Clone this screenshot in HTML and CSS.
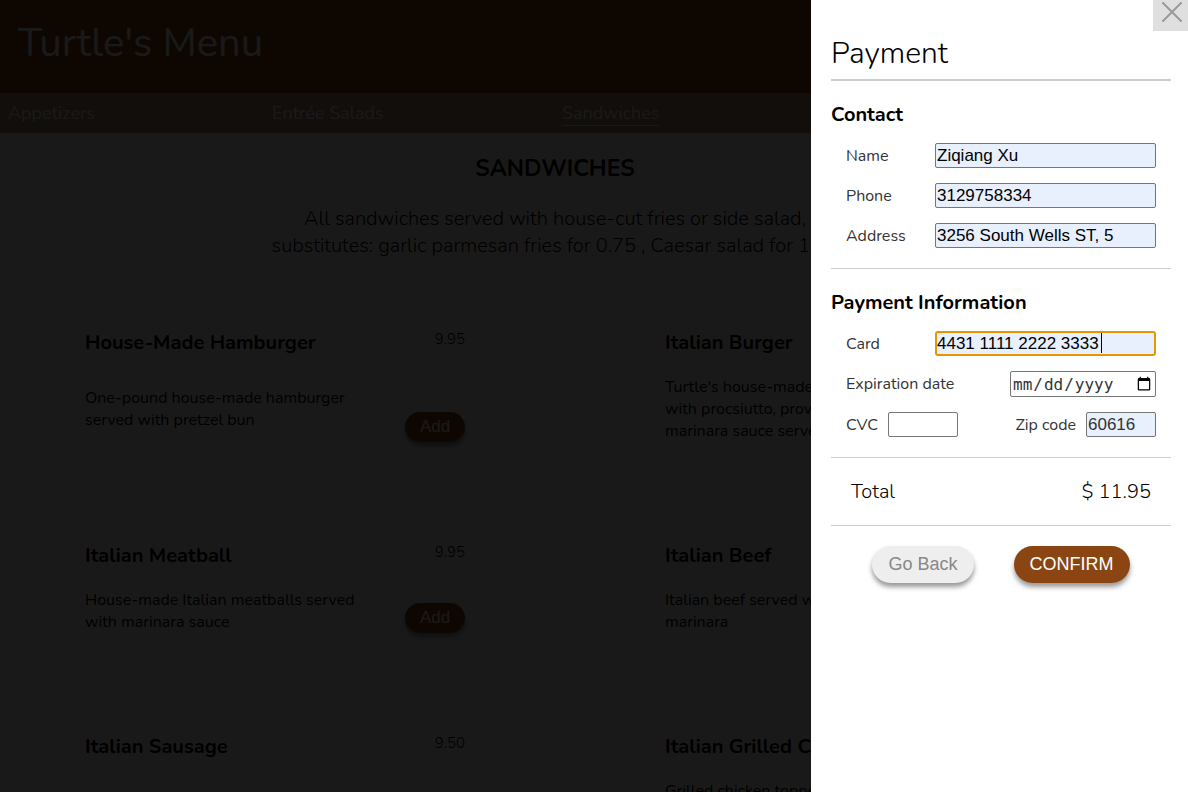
FILE: index.html
```html
<!DOCTYPE html>
<html lang="en">
<head>
<meta charset="utf-8">
<title>Turtle's Menu</title>
<link rel="stylesheet" href="styles.css">
</head>
<body>
<div class="page">
  <header class="header"><h1 class="brand">Turtle's Menu</h1></header>
  <nav class="nav">
    <a class="nav-link" href="#appetizers">Appetizers</a>
    <a class="nav-link" href="#salads">Entrée Salads</a>
    <a class="nav-link active" href="#sandwiches">Sandwiches</a>
  </nav>
  <main class="menu">
    <div class="intro">
      <h2 class="intro-title">SANDWICHES</h2>
      <p class="intro-text">All sandwiches served with house-cut fries or side salad,<br>substitutes: garlic parmesan fries for 0.75 , Caesar salad for 1.50</p>
    </div>
    <div class="items">
      <article class="item tall">
        <h3 class="item-name">House-Made Hamburger</h3><span class="price">9.95</span>
        <p class="desc">One-pound house-made hamburger served with pretzel bun</p><button class="add" type="button">Add</button>
      </article>
      <article class="item tall">
        <h3 class="item-name">Italian Burger</h3><span class="price"></span>
        <p class="desc">Turtle's house-made<br>with procsiutto, provolone,<br>marinara sauce served</p>
      </article>
      <article class="item">
        <h3 class="item-name">Italian Meatball</h3><span class="price">9.95</span>
        <p class="desc">House-made Italian meatballs served with marinara sauce</p><button class="add" type="button">Add</button>
      </article>
      <article class="item">
        <h3 class="item-name">Italian Beef</h3><span class="price"></span>
        <p class="desc">Italian beef served with<br>marinara</p>
      </article>
      <article class="item">
        <h3 class="item-name">Italian Sausage</h3><span class="price">9.50</span>
      </article>
      <article class="item">
        <h3 class="item-name">Italian Grilled Chicken</h3><span class="price"></span>
        <p class="desc">Grilled chicken topped<br>&nbsp;</p>
      </article>
    </div>
  </main>
</div>
<div class="overlay"></div>
<aside class="drawer">
  <button class="close" type="button" aria-label="Close">
    <svg class="close-icon" width="20" height="20" viewBox="0 0 20 20"><path d="M1 1 L19 19 M19 1 L1 19" fill="none" stroke="#999" stroke-width="2" stroke-linecap="round"/></svg>
  </button>
  <h2 class="title">Payment</h2>
  <form class="form">
    <section class="section">
      <h3 class="subtitle">Contact</h3>
      <div class="row"><label for="name">Name</label><input class="field filled" id="name" type="text" value="Ziqiang Xu"></div>
      <div class="row"><label for="phone">Phone</label><input class="field filled" id="phone" type="text" value="3129758334"></div>
      <div class="row"><label for="address">Address</label><input class="field filled" id="address" type="text" value="3256 South Wells ST, 5"></div>
    </section>
    <section class="section">
      <h3 class="subtitle">Payment Information</h3>
      <div class="row"><label for="card">Card</label><span class="card-wrap"><input class="field filled focused" id="card" type="text" value="4431 1111 2222 3333"><span class="caret"></span></span></div>
      <div class="row"><label for="exp">Expiration date</label><input class="field date" id="exp" type="date"></div>
      <div class="row">
        <span class="pair"><label for="cvc">CVC</label><input class="field short" id="cvc" type="text"></span>
        <span class="pair"><label for="zip">Zip code</label><input class="field short filled dim" id="zip" type="text" value="60616"></span>
      </div>
    </section>
    <div class="total"><span>Total</span><span>$ 11.95</span></div>
    <div class="actions">
      <button class="btn back" type="button">Go Back</button>
      <button class="btn confirm" type="button">CONFIRM</button>
    </div>
  </form>
</aside>
</body>
</html>
```
FILE: styles.css
```css
* { box-sizing: border-box; }
body {
  margin: 0;
  font-family: Nunito, "Open Sans", sans-serif;
  font-weight: 300;
  color: #000;
  background: #fff;
}
h1, h2, h3, p { margin: 0; }
.page { height: 100vh; overflow: hidden; }
.header { height: 93px; padding: 16px 18px; background: #8b4513; }
.brand { font-size: 40px; line-height: 54px; font-weight: 400; color: #fff; }
.nav {
  display: grid;
  grid-template-columns: 264px 290px auto;
  justify-items: start;
  align-items: center;
  height: 40px;
  padding: 0 8px;
  background: #b08c70;
}
.nav-link {
  font-size: 18px;
  line-height: 24px;
  font-weight: 400;
  color: #fff;
  text-decoration: none;
  border-bottom: 1px solid transparent;
}
.nav-link.active { border-color: #fff; }
.intro { width: 1110px; padding-top: 20px; text-align: center; }
.intro-title { font-size: 23px; line-height: 32px; font-weight: 700; }
.intro-text { padding-top: 20px; font-size: 20px; line-height: 27px; }
.items {
  display: grid;
  grid-template-columns: 380px 380px;
  column-gap: 200px;
  padding: 69px 0 0 85px;
}
.item {
  display: grid;
  grid-template-columns: 290px 1fr;
  grid-template-rows: 30px 44px;
  row-gap: 18px;
  height: 191px;
}
.item.tall { height: 213px; grid-template-rows: 30px 66px; }
.item-name { font-size: 20px; line-height: 30px; font-weight: 700; white-space: nowrap; }
.price { font-size: 15px; line-height: 22px; text-align: right; }
.desc { align-self: center; font-size: 16px; line-height: 22px; font-weight: 400; }
.add {
  align-self: end;
  justify-self: end;
  width: 60px;
  height: 30px;
  border: 0;
  border-radius: 15px;
  background: #8b4513;
  color: #fff;
  font: 17px "Liberation Sans", sans-serif;
  box-shadow: 0 4px 5px #999;
}
.overlay { position: fixed; inset: 0; background: rgba(0, 0, 0, .9); }
.drawer {
  position: fixed;
  top: 0;
  right: 0;
  bottom: 0;
  width: 377px;
  padding: 34px 17px 0 20px;
  background: #fff;
}
.close {
  position: absolute;
  top: 0;
  right: 0;
  display: flex;
  justify-content: center;
  width: 35px;
  height: 31px;
  padding: 2px 0 0 2px;
  border: 0;
  background: #dfdfdf;
}
.title {
  padding-bottom: 5px;
  border-bottom: 2px solid #ccc;
  font-size: 30px;
  line-height: 40px;
  font-weight: 300;
}
.section { padding: 20px 0; border-bottom: 1px solid #ccc; }
.subtitle { padding-bottom: 14px; font-size: 20px; line-height: 28px; font-weight: 700; }
.row {
  display: flex;
  justify-content: space-between;
  align-items: center;
  padding: 0 15px;
  font-size: 16px;
  font-weight: 400;
  color: #333;
}
.row + .row { padding-top: 15px; }
.field {
  width: 221px;
  height: 25px;
  padding: 1px;
  border: 1px solid #767676;
  border-radius: 2px;
  background: #fff;
  color: #000;
  font: 17px "Liberation Sans", sans-serif;
}
.filled { background: #e8f0fe; }
.focused { display: block; padding: 0; border: 2px solid #e59700; border-radius: 3px; outline: 0; }
.card-wrap { position: relative; }
.caret { position: absolute; top: 2px; left: 166px; width: 1px; height: 20px; background: #000; }
.date { width: 146px; height: 26px; padding: 1px; color: #333; font: 16px "DejaVu Sans Mono", monospace; }
.dim { color: #333; }
.pair { display: flex; align-items: center; gap: 10px; }
.short { width: 70px; }
.total {
  display: flex;
  justify-content: space-between;
  padding: 20px 20px 19px;
  border-bottom: 1px solid #ccc;
  font-size: 20px;
  line-height: 28px;
}
.actions { display: flex; justify-content: center; gap: 40px; padding-top: 20px; }
.btn {
  height: 37px;
  padding: 0 16px;
  border: 0;
  border-radius: 19px;
  font: 18px "Liberation Sans", sans-serif;
  box-shadow: 0 4px 5px #999;
}
.back { background: #eee; color: #888; }
.confirm { background: #8b4513; color: #fff; }
```
